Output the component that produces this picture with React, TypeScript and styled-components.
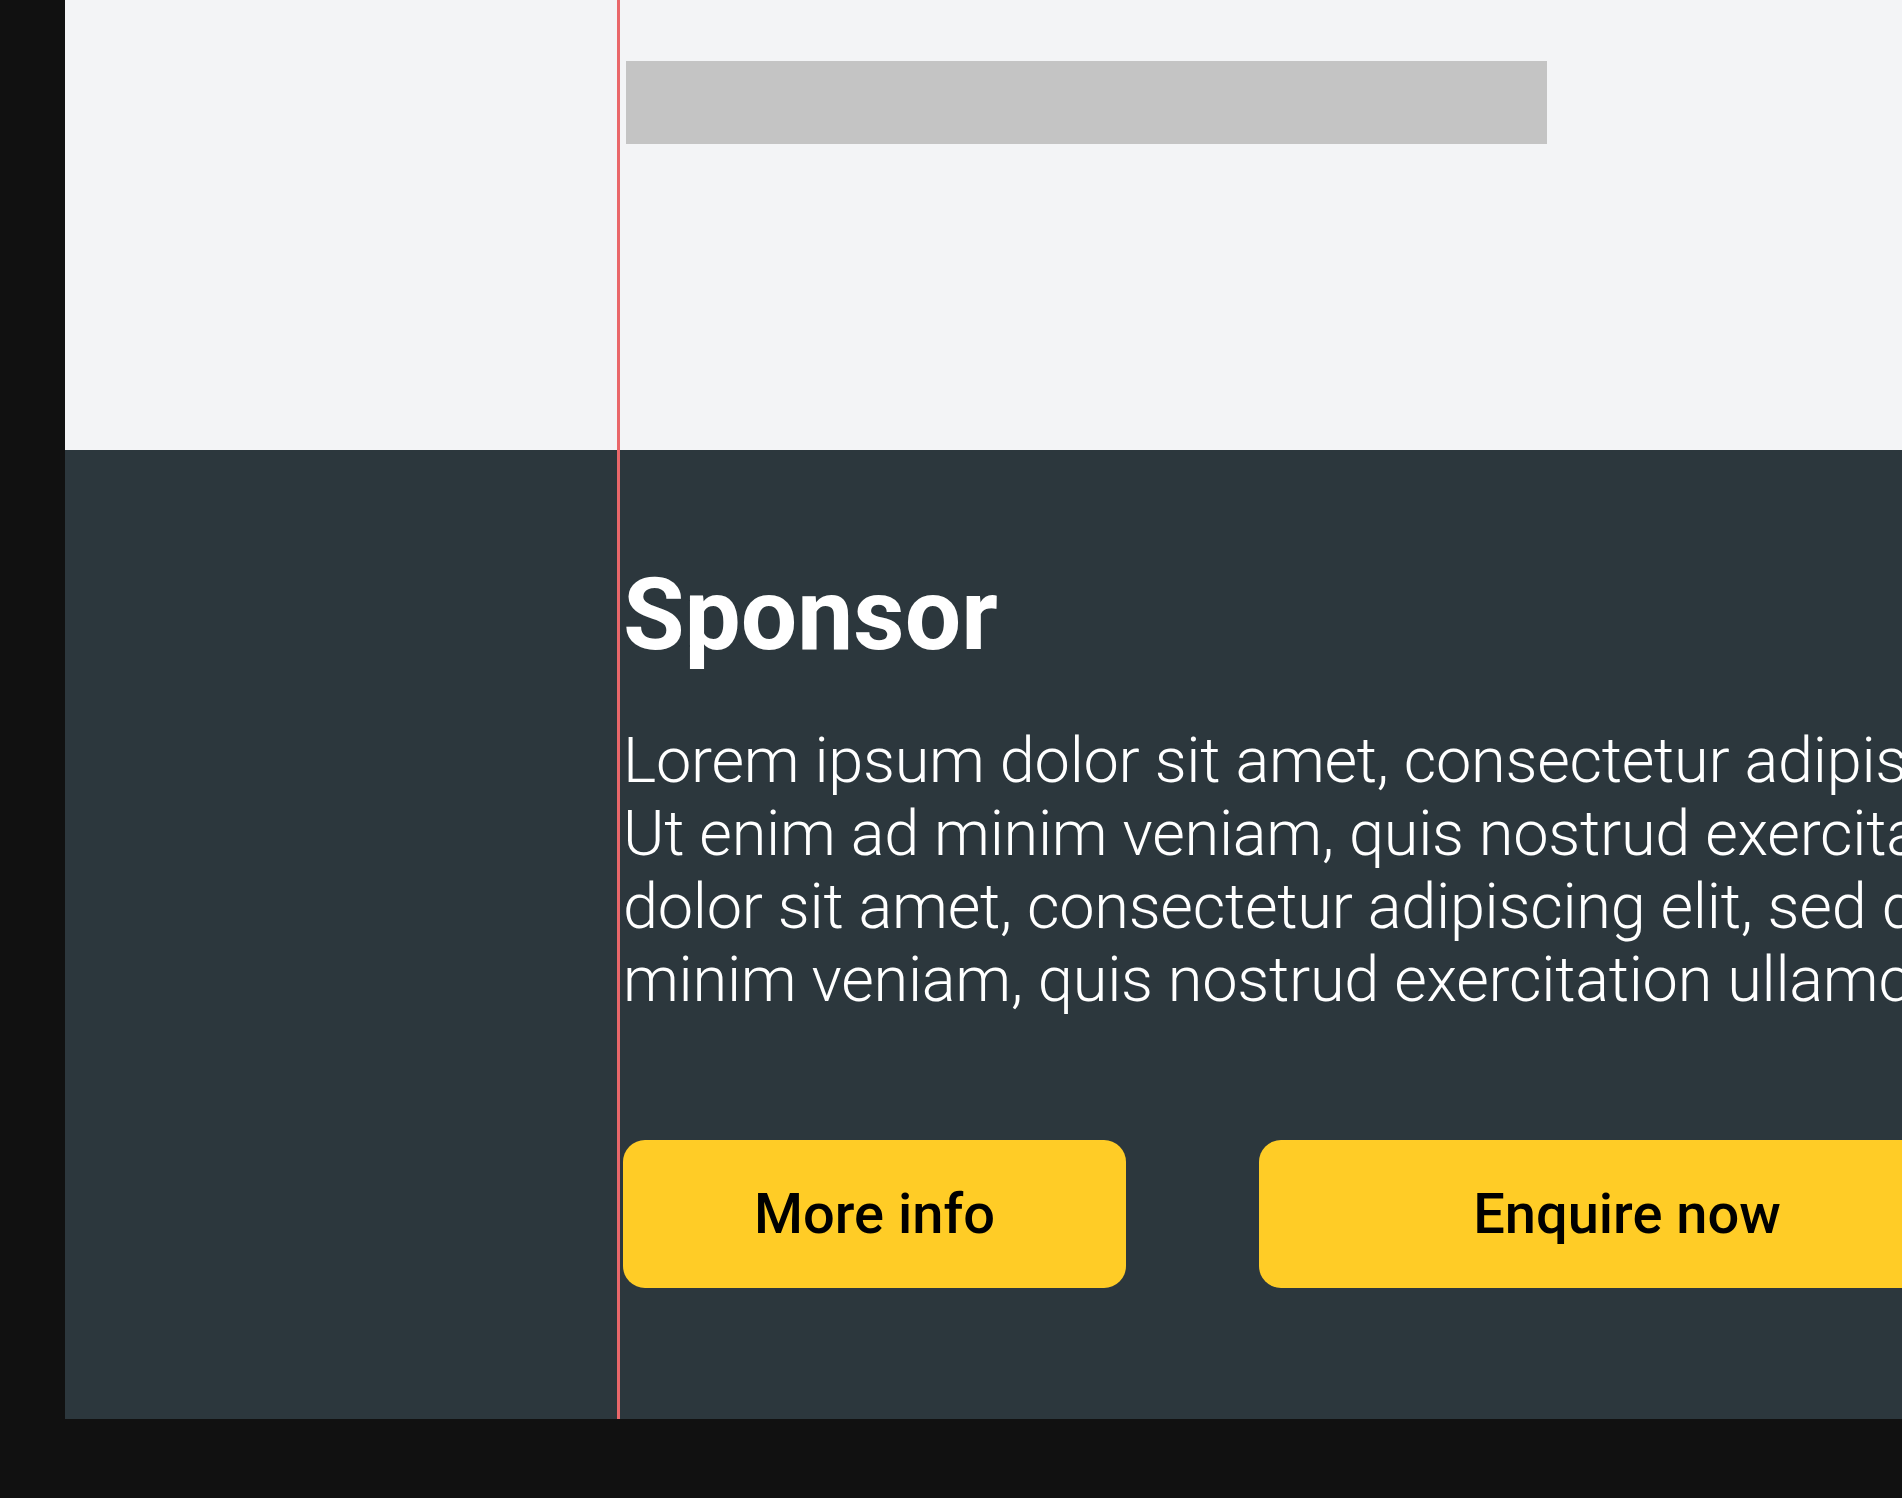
import React from "react";
import styled, { createGlobalStyle } from "styled-components";

const Global = createGlobalStyle`
  html, body { margin: 0; padding: 0; background: #111111; }
  body { overflow: hidden; font-family: Roboto, "Liberation Sans", sans-serif; }
`;

const Frame = styled.div`
  width: 1902px;
  height: 1498px;
  box-sizing: border-box;
  padding: 0 0 79px 65px;
  background: #111111;
  overflow: hidden;
`;

const Canvas = styled.div`
  position: relative;
  display: flex;
  flex-direction: column;
  height: 100%;
  min-width: 2400px;
`;

const Guide = styled.div`
  position: absolute;
  top: 0;
  bottom: 0;
  left: 552px;
  width: 3px;
  background: #e9676a;
  z-index: 2;
`;

const Section = styled.section<{ $tone: "light" | "dark" }>`
  background: ${(p) => (p.$tone === "light" ? "#f3f4f6" : "#2c373d")};
  padding-left: 558px;
  box-sizing: border-box;
`;

const TopSection = styled(Section)`
  height: 450px;
  padding-top: 61px;
`;

const BottomSection = styled(Section)`
  flex: 1;
  padding-top: 105px;
`;

const Placeholder = styled.div`
  width: 921px;
  height: 83px;
  margin-left: 3px;
  background: #c4c4c4;
`;

const Heading = styled.h2`
  margin: 0;
  font-family: Roboto, "Liberation Sans", sans-serif;
  font-weight: 700;
  font-size: 100px;
  line-height: 120px;
  color: #ffffff;
`;

const Body = styled.p`
  margin: 49px 0 0;
  font-family: Roboto, "Liberation Sans", sans-serif;
  font-weight: 300;
  font-size: 63px;
  line-height: 73px;
  letter-spacing: -0.25px;
  color: #ffffff;
  white-space: nowrap;
`;

const Actions = styled.div`
  display: flex;
  gap: 133px;
  margin-top: 124px;
`;

const Button = styled.button<{ $width: number }>`
  width: ${(p) => p.$width}px;
  height: 148px;
  border: none;
  border-radius: 22px;
  background: #ffcc26;
  color: #000000;
  font-family: Roboto, "Liberation Sans", sans-serif;
  font-weight: 500;
  font-size: 56px;
  cursor: pointer;
`;

export default function App() {
  return (
    <>
      <Global />
      <Frame>
        <Canvas>
          <Guide />
          <TopSection $tone="light">
            <Placeholder />
          </TopSection>
          <BottomSection $tone="dark">
            <Heading>Sponsor</Heading>
            <Body>
              Lorem ipsum dolor sit amet, consectetur adipiscing elit, sed do eiusmod tempor incididunt ut labore et dolore magna aliqua.
              <br />
              Ut enim ad minim veniam, quis nostrud exercitation ullamco laboris nisi ut aliquip ex ea commodo consequat. Lorem ipsum
              <br />
              dolor sit amet, consectetur adipiscing elit, sed do eiusmod tempor incididunt ut labore et dolore magna aliqua. Ut enim ad
              <br />
              minim veniam, quis nostrud exercitation ullamco laboris nisi ut aliquip ex ea commodo consequat.
            </Body>
            <Actions>
              <Button $width={503}>More info</Button>
              <Button $width={736}>Enquire now</Button>
            </Actions>
          </BottomSection>
        </Canvas>
      </Frame>
    </>
  );
}
